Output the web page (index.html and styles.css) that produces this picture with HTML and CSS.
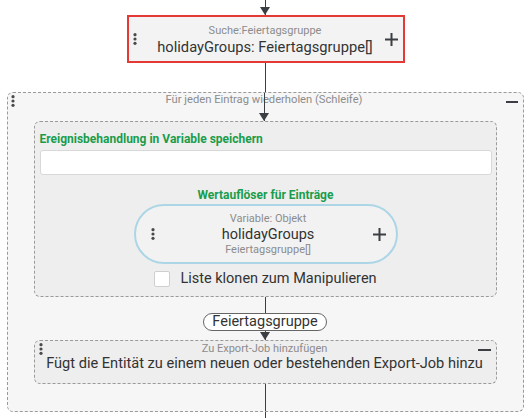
FILE: index.html
```html
<!DOCTYPE html>
<html lang="de">
<head>
    <meta charset="UTF-8">
    <title>Ablauf</title>
    <link rel="stylesheet" href="styles.css">
</head>
<body>

    <div class="flow">
        <div class="wire wire-top arrow"></div>

        <div class="node search">
            <svg class="dots" width="4" height="12" viewBox="0 0 4 12"><circle cx="2" cy="1.7" r="1.6"/><circle cx="2" cy="6" r="1.6"/><circle cx="2" cy="10.3" r="1.6"/></svg>
            <div class="node-text">
                <small>Suche:Feiertagsgruppe</small>
                <span>holidayGroups: Feiertagsgruppe[]</span>
            </div>
            <svg class="plus" width="13" height="13" viewBox="0 0 13 13"><path d="M6.5 0v13M0 6.5h13"/></svg>
        </div>

        <div class="wire wire-mid"></div>

        <div class="loop">
            <div class="loop-head">
                <svg class="dots" width="4" height="12" viewBox="0 0 4 12"><circle cx="2" cy="1.7" r="1.6"/><circle cx="2" cy="6" r="1.6"/><circle cx="2" cy="10.3" r="1.6"/></svg>
                <small class="loop-title">Für jeden Eintrag wiederholen (Schleife)</small>
                <div class="wire wire-head arrow"></div>
                <svg class="minus" width="12" height="2" viewBox="0 0 12 2"><rect width="12" height="2"/></svg>
            </div>

            <div class="loop-body">
                <div class="handler">
                    <label for="eventVar" class="green">Ereignisbehandlung in Variable speichern</label>
                    <input type="text" id="eventVar">

                    <div class="green resolver-title">Wertauflöser für Einträge</div>
                    <div class="pill">
                        <svg class="dots" width="4" height="12" viewBox="0 0 4 12"><circle cx="2" cy="1.7" r="1.6"/><circle cx="2" cy="6" r="1.6"/><circle cx="2" cy="10.3" r="1.6"/></svg>
                        <div class="node-text">
                            <small>Variable: Objekt</small>
                            <span>holidayGroups</span>
                            <small>Feiertagsgruppe[]</small>
                        </div>
                        <svg class="plus" width="13" height="13" viewBox="0 0 13 13"><path d="M6.5 0v13M0 6.5h13"/></svg>
                    </div>

                    <label class="check">
                        <input type="checkbox">
                        <span class="box"></span>
                        Liste klonen zum Manipulieren
                    </label>
                </div>

                <div class="wire wire-tag"></div>
                <div class="tag">Feiertagsgruppe</div>
                <div class="wire wire-in arrow"></div>

                <div class="export">
                    <svg class="dots" width="4" height="12" viewBox="0 0 4 12"><circle cx="2" cy="1.7" r="1.6"/><circle cx="2" cy="6" r="1.6"/><circle cx="2" cy="10.3" r="1.6"/></svg>
                    <small class="export-title">Zu Export-Job hinzufügen</small>
                    <svg class="minus" width="13" height="2" viewBox="0 0 13 2"><rect width="13" height="2"/></svg>
                    <span class="export-text">Fügt die Entität zu einem neuen oder bestehenden Export-Job hinzu</span>
                </div>

                <div class="wire wire-out"></div>
            </div>
        </div>

        <div class="wire wire-end"></div>
    </div>

</body>
</html>
```

FILE: styles.css
```css
body {
    margin: 0;
    padding: 0;
    font-family: Roboto, "Liberation Sans", sans-serif;
    background: #fff;
    color: #333;
}
.flow {
    width: 532px;
    display: flex;
    flex-direction: column;
    align-items: center;
}
small {
    font-size: 11px;
    line-height: 14px;
    color: #8c8c8c;
}

/* connectors */
.wire {
    width: 1px;
    background: #3b3f43;
    position: relative;
    flex-shrink: 0;
}
.wire.arrow::after {
    content: '';
    position: absolute;
    bottom: 0;
    left: -5px;
    border-left: 5.5px solid transparent;
    border-right: 5.5px solid transparent;
    border-top: 8px solid #3b3f43;
}
.wire-top { height: 15px; margin-left: -1px; }
.wire-mid { height: 29px; margin-left: -1px; }
.wire-end { height: 6px; margin-left: -1px; }
.wire-tag { height: 16px; }
.wire-in { height: 9px; }
.wire-out { height: 27px; }

.dots { fill: #4a4a4a; }
.plus { stroke: #3b3f43; stroke-width: 2; fill: none; }
.minus { fill: #3b3f43; }

/* nodes */
.node {
    box-sizing: border-box;
    display: grid;
    grid-template-columns: 13px 1fr 13px;
    align-items: center;
}
.node-text {
    display: flex;
    flex-direction: column;
    align-items: center;
}
.node-text span {
    font-size: 14.5px;
    line-height: 17px;
}
.search {
    width: 278px;
    height: 48px;
    margin-left: -1px;
    padding: 0 5px 0 4px;
    border: 2px solid #e53935;
    background: #f3f3f3;
}
.search .node-text { margin-top: 1px; }
.search .node-text span {
    font-size: 14.7px;
    line-height: 18px;
}
.search .plus { justify-self: end; }

/* loop */
.loop {
    box-sizing: border-box;
    width: 517px;
    margin-left: -2px;
    border: 1px dashed #9a9a9a;
    border-radius: 6px;
    background: #f6f6f6;
}
.loop-head {
    height: 28px;
    display: grid;
    grid-template-columns: 12px 1fr 12px;
    padding: 0 5px 0 3px;
}
.loop-head .dots {
    grid-column: 1;
    grid-row: 1;
    margin-top: 2px;
}
.loop-title {
    grid-column: 2;
    grid-row: 1;
    justify-self: center;
    font-size: 11.2px;
}
.wire-head {
    grid-column: 2;
    grid-row: 1;
    justify-self: center;
    height: 28px;
}
.loop-head .minus {
    grid-column: 3;
    grid-row: 1;
    margin-top: 8px;
}
.loop-body {
    padding: 0 26px;
    display: flex;
    flex-direction: column;
    align-items: center;
}

.handler {
    box-sizing: border-box;
    width: 100%;
    height: 176px;
    padding: 10px 4px 0 5px;
    border: 1px dashed #9a9a9a;
    border-radius: 6px;
    background: #eeeeee;
    display: flex;
    flex-direction: column;
    align-items: center;
}
.green {
    color: #1a9c4b;
    font-size: 12px;
    font-weight: bold;
    line-height: 14px;
}
.handler > label.green {
    align-self: flex-start;
}
.handler input[type=text] {
    box-sizing: border-box;
    width: 100%;
    height: 25px;
    margin-top: 4px;
    border: 1px solid #d8d8d8;
    border-radius: 3px;
    background: #fff;
}
.resolver-title {
    margin-top: 13px;
}
.pill {
    box-sizing: border-box;
    width: 264px;
    height: 60px;
    margin-top: 2px;
    padding: 0 10px 0 15px;
    border: 2px solid #acd6e6;
    border-radius: 30px;
    background: #f2f2f2;
    display: grid;
    grid-template-columns: 13px 1fr 13px;
    align-items: center;
}
.check {
    display: flex;
    align-items: center;
    margin-top: 7px;
    font-size: 14.5px;
    line-height: 16px;
    color: #333;
}
.check input {
    display: none;
}
.check .box {
    box-sizing: border-box;
    width: 16px;
    height: 16px;
    margin-right: 10px;
    border: 1px solid #cfcfcf;
    border-radius: 2px;
    background: #fff;
}

.tag {
    box-sizing: border-box;
    height: 18px;
    padding: 0 8px;
    border: 1px solid #666;
    border-radius: 9px;
    background: #fff;
    font-size: 14.5px;
    line-height: 16px;
}

.export {
    box-sizing: border-box;
    width: 100%;
    height: 44px;
    padding: 1px 5px 0 4px;
    border: 1px dashed #9a9a9a;
    border-radius: 6px;
    background: #eeeeee;
    display: grid;
    grid-template-columns: 13px 1fr 13px;
    grid-template-rows: 13px 16px;
}
.export .dots {
    grid-column: 1;
    grid-row: 1 / span 2;
    margin-top: 1px;
}
.export-title {
    grid-column: 2;
    grid-row: 1;
    justify-self: center;
    line-height: 13px;
}
.export .minus {
    grid-column: 3;
    grid-row: 1;
    margin-top: 7px;
}
.export-text {
    grid-column: 1 / span 3;
    grid-row: 2;
    justify-self: center;
    font-size: 14.6px;
    line-height: 16px;
    white-space: nowrap;
}
```
